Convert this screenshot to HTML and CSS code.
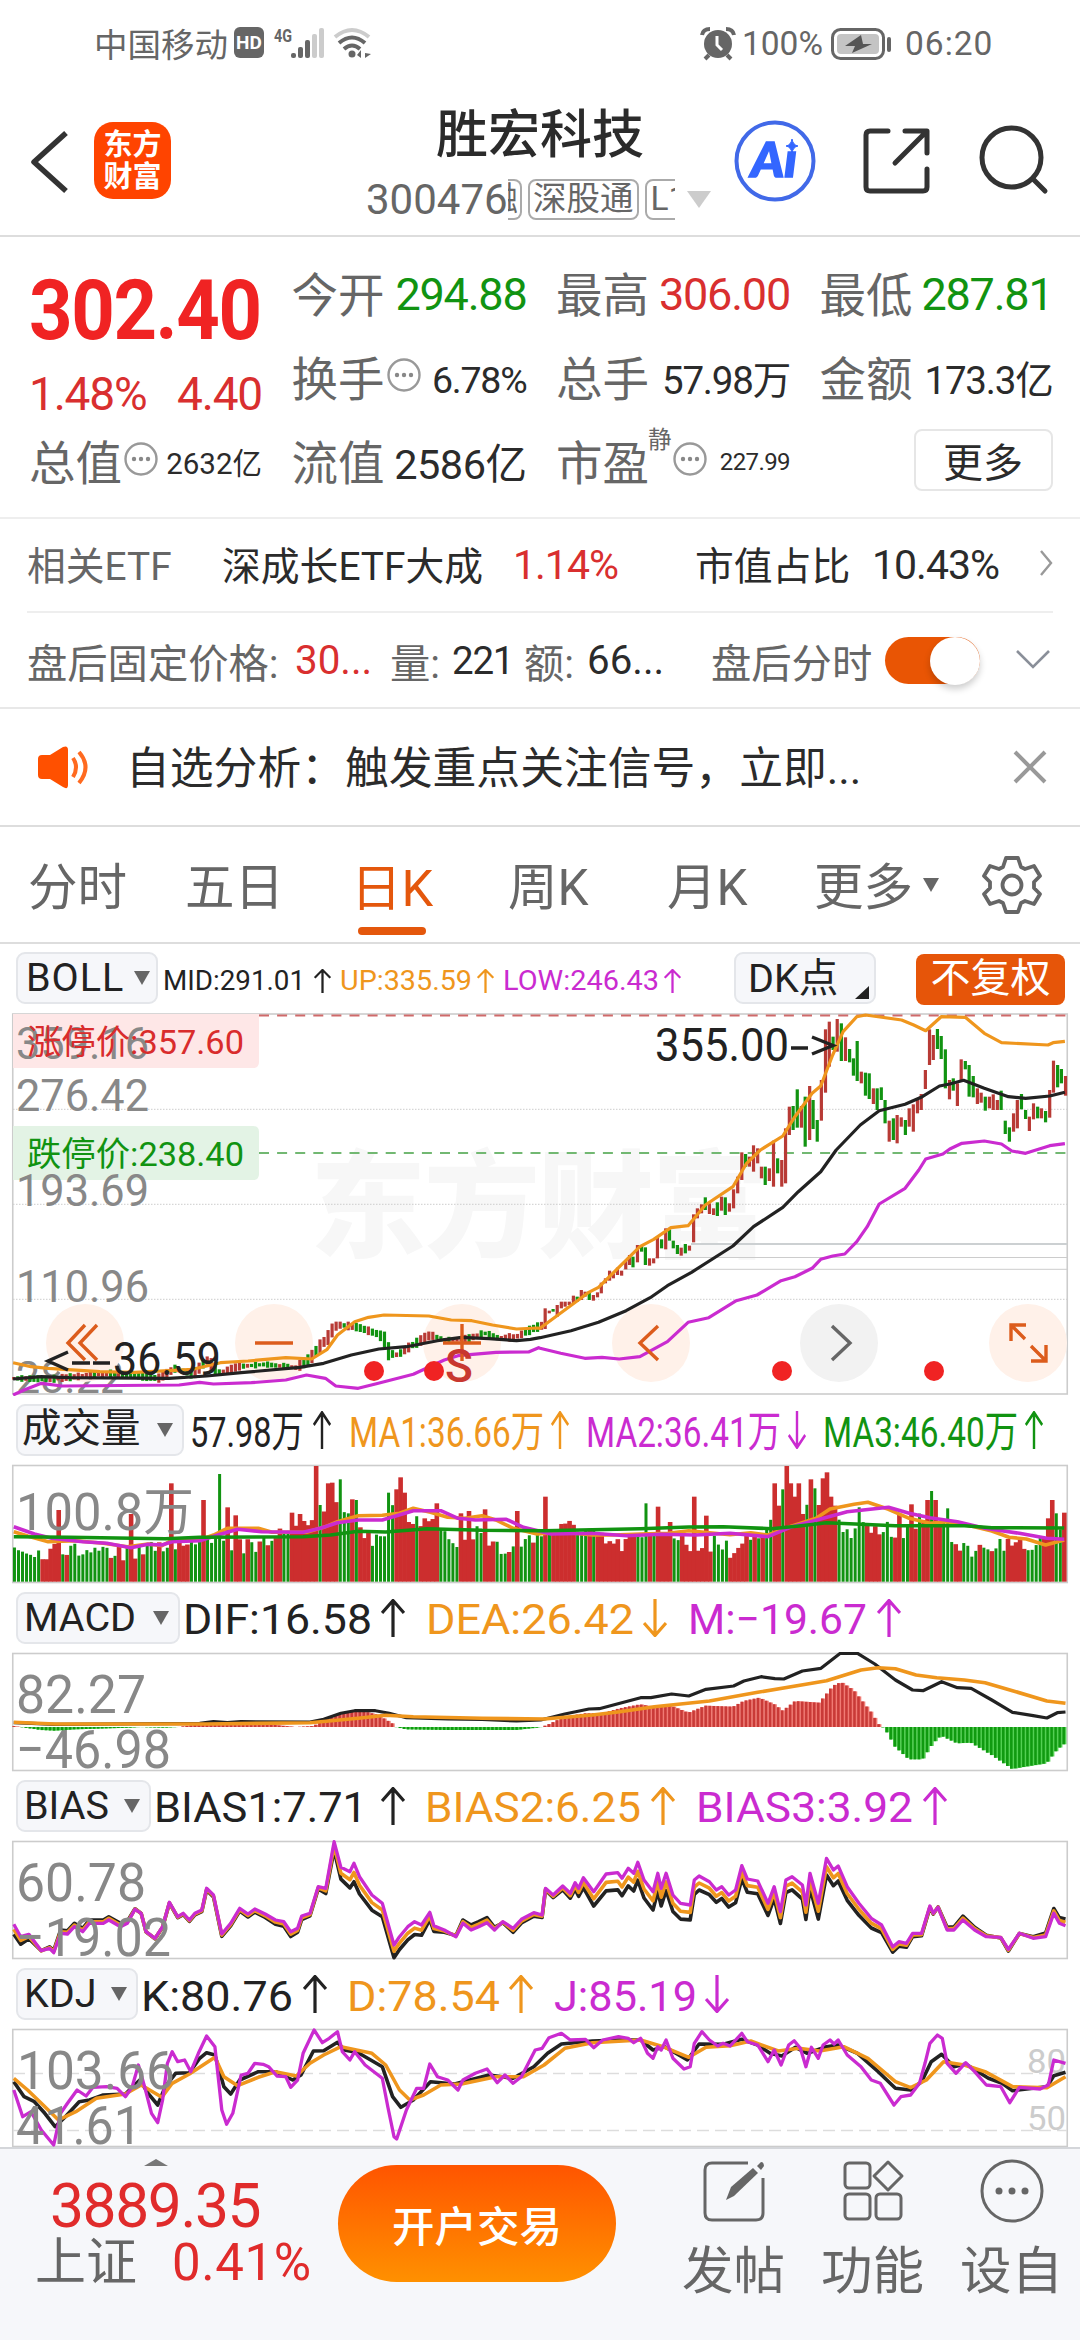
FILE: index.html
```html
<!DOCTYPE html>
<html lang="zh-CN">
<head>
    <meta charset="UTF-8" />
    <title>胜宏科技 300476</title>
    <link rel="stylesheet" href="styles.css">
</head>
<body>
<svg class="defs" width="0" height="0">
    <symbol id="up" viewBox="0 0 24 38" preserveAspectRatio="none"><path d="M12 38V2M1 14L12 1.5L23 14" fill="none" stroke="currentColor" stroke-width="3.2"/></symbol>
    <symbol id="down" viewBox="0 0 24 38" preserveAspectRatio="none"><path d="M12 0V36M1 24L12 36.5L23 24" fill="none" stroke="currentColor" stroke-width="3.2"/></symbol>
    <symbol id="more" viewBox="0 0 34 34"><circle cx="17" cy="17" r="15.500" fill="none" stroke="#999" stroke-width="2.4"/><g fill="#888"><circle cx="10" cy="17" r="2.200"/><circle cx="17" cy="17" r="2.200"/><circle cx="24" cy="17" r="2.200"/></g></symbol>
</svg>
<div class="page">
    <!-- Status bar -->
    <div class="status">
        <span class="carrier">中国移动</span>
        <span class="hd">HD</span>
        <svg class="signal" width="100" height="34" viewBox="272 26 100 34">
            <text x="274" y="41" font-size="19" font-weight="700" fill="#666" textLength="18" lengthAdjust="spacingAndGlyphs">4G</text>
            <g fill="#666"><rect x="291" y="52" width="5" height="5" rx="2"/><rect x="298" y="46" width="5" height="11" rx="2"/><rect x="305" y="39" width="5" height="18" rx="2"/></g>
            <g fill="#ccc"><rect x="312" y="33" width="5" height="24" rx="2"/><rect x="319" y="27" width="5" height="30" rx="2"/></g>
            <g fill="none" stroke-width="4"><path d="M335 36Q352 22 369 36" stroke="#ccc"/><path d="M339 42Q352 31 365 42" stroke="#666"/><path d="M344 48Q352 41 360 48" stroke="#666"/></g>
            <circle cx="352" cy="53" r="3.5" fill="#666"/><path d="M357 54l4-5v8zM371 53l-6-1v5zM366 51v7" fill="#666"/>
        </svg>
        <span class="spacer"></span>
        <svg width="36" height="34" viewBox="700 26 36 34"><circle cx="718" cy="43" r="14" fill="#666"/><path d="M702 34Q703 28 710 28M726 28Q733 28 734 34M709 54l-4 4M727 54l4 4" stroke="#666" stroke-width="4" fill="none"/><path d="M717 35v9l5 5" stroke="#fff" stroke-width="3" fill="none"/></svg>
        <span class="percent">100%</span>
        <svg class="battery" width="62" height="34" viewBox="829 25 62 34"><rect x="831.5" y="27.500" width="51" height="29" rx="8" fill="none" stroke="#666" stroke-width="3"/><rect x="836" y="32" width="42" height="20" rx="4" fill="#c4c4c4"/><path d="M860 33l-16 11h10l-3 7 20-9h-9z" fill="#555"/><rect x="886" y="35" width="4" height="15" rx="2" fill="#666"/></svg>
        <span class="clock">06:20</span>
    </div>

    <!-- Title bar -->
    <div class="header">
        <svg class="back" width="40" height="66" viewBox="0 0 40 66"><path d="M36 4L4 33L36 62" fill="none" stroke="#333" stroke-width="5.500" stroke-linejoin="round"/></svg>
        <div class="logo"><span>东方</span><span>财富</span></div>
        <div class="title">
            <h1>胜宏科技</h1>
            <div class="code">
                <span class="code-num">300476</span>
                <div class="tags"><span class="tag cut-left">融</span><span class="tag">深股通</span><span class="tag cut-right">L1</span></div>
                <i class="tri light"></i>
            </div>
        </div>
        <svg class="actions" width="330" height="90" viewBox="730 116 330 90">
            <circle cx="775" cy="161" r="38.500" fill="none" stroke="#4169e8" stroke-width="4"/>
            <text x="751" y="177" font-size="47" font-weight="900" font-style="italic" fill="#3366ff" stroke="#3366ff" stroke-width="1.600" textLength="46" lengthAdjust="spacingAndGlyphs" class="ai">Aı</text>
            <path d="M792 139q1 6 6 7q-5 1-6 7q-1-6-6-7q5-1 6-7z" fill="#3366ff" stroke="#3366ff"/>
            <g fill="none" stroke="#333" stroke-width="5" stroke-linecap="round" stroke-linejoin="round">
                <path d="M888 131H870q-4 0-4 4V187q0 4 4 4H923q4 0 4-4V169"/><path d="M905 131H927V153M926 132L895 163"/>
                <circle cx="1011.500" cy="157.500" r="29.500"/><path d="M1033 179l12 12"/>
            </g>
        </svg>
    </div>

    <!-- Quote -->
    <div class="quote">
        <div class="price">
            <div class="last">302.40</div>
            <div class="change"><span>1.48%</span><span>4.40</span></div>
        </div>
        <div class="cell r1"><label>今开</label><b class="green">294.88</b></div>
        <div class="cell r1"><label>最高</label><b class="red">306.00</b></div>
        <div class="cell r1"><label>最低</label><b class="green">287.81</b></div>
        <div class="cell r2"><label>换手</label><svg width="34" height="34"><use href="#more"/></svg><b class="v37">6.78%</b></div>
        <div class="cell r2"><label>总手</label><b class="v38">57.98万</b></div>
        <div class="cell r2"><label>金额</label><b class="v38">173.3亿</b></div>
        <div class="cell r3"><label>总值</label><svg width="34" height="34"><use href="#more"/></svg><b class="v29">2632亿</b></div>
        <div class="cell r3"><label>流值</label><b class="v41">2586亿</b></div>
        <div class="cell r3"><label>市盈</label><sup>静</sup><svg class="tight" width="34" height="34"><use href="#more"/></svg><b class="v24">227.99</b></div>
        <div class="cell r3"><button class="more">更多</button></div>
    </div>

    <div class="etf">
        <span class="gray">相关ETF</span><span>深成长ETF大成</span><span class="red num">1.14%</span><span>市值占比</span><span class="num">10.43%</span>
        <svg width="14" height="28" viewBox="0 0 14 28"><path d="M2 2L12 14L2 26" fill="none" stroke="#999" stroke-width="2.4"/></svg>
    </div>

    <div class="after">
        <span class="gray">盘后固定价格:</span><span class="red">30...</span><span class="gray">量:</span><span class="lots">221</span><span class="gray">额:</span><span>66...</span><span class="gray">盘后分时</span>
        <span class="toggle"><i></i></span>
        <svg width="34" height="22" viewBox="0 0 34 22"><path d="M1 2L17 18L33 2" fill="none" stroke="#8a8f99" stroke-width="2.600"/></svg>
    </div>

    <div class="notice">
        <svg width="52" height="44" viewBox="37 744 52 44"><path d="M42 754h8l13-8q5-2 5 3v35q0 5-5 2l-13-8h-8q-4 0-4-4v-16q0-4 4-4z" fill="#ff5000"/><path d="M73 757q6 9 0 19M79 751q13 15 0 31" fill="none" stroke="#ff6a20" stroke-width="4"/></svg>
        <p>自选分析：触发重点关注信号，立即...</p>
        <svg width="34" height="34" viewBox="0 0 34 34"><path d="M2 2L32 32M32 2L2 32" stroke="#999" stroke-width="4"/></svg>
    </div>

    <div class="tabs">
        <span>分时</span><span>五日</span><span class="active">日K</span><span>周K</span><span>月K</span><span>更多<i class="tri"></i></span>
        <svg width="60" height="60" viewBox="-30 -30 60 60"><path d="M-6-27H6L9-18L13-16L22-19L28-9L22-3V3L28 9L22 19L13 16L9 18L6 27H-6L-9 18L-13 16L-22 19L-28 9L-22 3V-3L-28-9L-22-19L-13-16L-9-18Z" fill="none" stroke="#666" stroke-width="3.800" stroke-linejoin="round"/><circle r="9.500" fill="none" stroke="#666" stroke-width="3.800"/></svg>
    </div>

    <!-- K line -->
    <div class="bar boll">
        <div class="chip"><span>BOLL</span><i class="tri"></i></div>
        <svg class="legend" width="576" height="69" viewBox="158 944 576 69" font-size="28">
            <g color="#222"><text x="163" y="990" textLength="142" lengthAdjust="spacingAndGlyphs">MID:291.01</text><use href="#up" x="314" y="969" width="17" height="24"/></g>
            <g color="#ef961d"><text x="340" y="990" textLength="132" lengthAdjust="spacingAndGlyphs">UP:335.59</text><use href="#up" x="477" y="969" width="17" height="24"/></g>
            <g color="#ca2bd0"><text x="503" y="990" textLength="156" lengthAdjust="spacingAndGlyphs">LOW:246.43</text><use href="#up" x="664" y="969" width="17" height="24"/></g>
        </svg>
        <div class="chip dk"><span>DK点</span><i></i></div>
        <div class="fq">不复权</div>
    </div>
    <svg id="kline" class="chart" width="1080" height="383" viewBox="0 1013 1080 383"></svg>

    <!-- Volume -->
    <div class="bar">
        <div class="chip w-vol"><span>成交量</span><i class="tri"></i></div>
        <svg class="legend" width="896" height="68" viewBox="184 1396 896 68" font-size="43">
            <g color="#222"><text x="190" y="1447" textLength="114" lengthAdjust="spacingAndGlyphs">57.98万</text><use href="#up" x="313" y="1411" width="18" height="38"/></g>
            <g color="#ef961d"><text x="349" y="1447" textLength="195" lengthAdjust="spacingAndGlyphs">MA1:36.66万</text><use href="#up" x="551" y="1411" width="18" height="38"/></g>
            <g color="#ca2bd0"><text x="586" y="1447" textLength="195" lengthAdjust="spacingAndGlyphs">MA2:36.41万</text><use href="#down" x="788" y="1411" width="18" height="38"/></g>
            <g color="#119311"><text x="823" y="1447" textLength="195" lengthAdjust="spacingAndGlyphs">MA3:46.40万</text><use href="#up" x="1025" y="1411" width="18" height="38"/></g>
        </svg>
    </div>
    <svg id="vol" class="chart" width="1080" height="120" viewBox="0 1464 1080 120"></svg>

    <!-- MACD -->
    <div class="bar">
        <div class="chip w-macd"><span>MACD</span><i class="tri"></i></div>
        <svg class="legend" width="900" height="68" viewBox="180 1584 900 68" font-size="43">
            <g color="#222"><text x="183" y="1634" textLength="189" lengthAdjust="spacingAndGlyphs">DIF:16.58</text><use href="#up" x="381" y="1599" width="24" height="38"/></g>
            <g color="#ef961d"><text x="426" y="1634" textLength="208" lengthAdjust="spacingAndGlyphs">DEA:26.42</text><use href="#down" x="643" y="1599" width="24" height="38"/></g>
            <g color="#ca2bd0"><text x="688" y="1634" textLength="179" lengthAdjust="spacingAndGlyphs">M:−19.67</text><use href="#up" x="877" y="1599" width="24" height="38"/></g>
        </svg>
    </div>
    <svg id="macd" class="chart" width="1080" height="120" viewBox="0 1652 1080 120"></svg>

    <!-- BIAS -->
    <div class="bar">
        <div class="chip w-bias"><span>BIAS</span><i class="tri"></i></div>
        <svg class="legend" width="929" height="68" viewBox="151 1772 929 68" font-size="43">
            <g color="#222"><text x="154" y="1822" textLength="213" lengthAdjust="spacingAndGlyphs">BIAS1:7.71</text><use href="#up" x="381" y="1787" width="24" height="38"/></g>
            <g color="#ef961d"><text x="425" y="1822" textLength="216" lengthAdjust="spacingAndGlyphs">BIAS2:6.25</text><use href="#up" x="651" y="1787" width="24" height="38"/></g>
            <g color="#ca2bd0"><text x="696" y="1822" textLength="217" lengthAdjust="spacingAndGlyphs">BIAS3:3.92</text><use href="#up" x="923" y="1787" width="24" height="38"/></g>
        </svg>
    </div>
    <svg id="bias" class="chart" width="1080" height="120" viewBox="0 1840 1080 120"></svg>

    <!-- KDJ -->
    <div class="bar">
        <div class="chip w-kdj"><span>KDJ</span><i class="tri"></i></div>
        <svg class="legend" width="942" height="68" viewBox="138 1960 942 68" font-size="43">
            <g color="#222"><text x="141" y="2011" textLength="152" lengthAdjust="spacingAndGlyphs">K:80.76</text><use href="#up" x="303" y="1975" width="24" height="38"/></g>
            <g color="#ef961d"><text x="347" y="2011" textLength="153" lengthAdjust="spacingAndGlyphs">D:78.54</text><use href="#up" x="509" y="1975" width="24" height="38"/></g>
            <g color="#ca2bd0"><text x="554" y="2011" textLength="143" lengthAdjust="spacingAndGlyphs">J:85.19</text><use href="#down" x="705" y="1975" width="24" height="38"/></g>
        </svg>
    </div>
    <svg id="kdj" class="chart" width="1080" height="119" viewBox="0 2028 1080 119"></svg>

    <!-- Bottom bar -->
    <div class="footer">
        <div class="index">
            <i></i>
            <strong>3889.35</strong>
            <div><span>上证</span><em>0.41%</em></div>
        </div>
        <button class="trade">开户交易</button>
        <div class="nav">
            <div>
                <svg width="64" height="64" viewBox="701 2159 64 64" fill="none" stroke="#666" stroke-width="3"><path d="M747 2163H711q-7 0-7 7V2213q0 7 7 7H755q7 0 7-7V2178"/><path d="M725 2200L730 2187L752 2168L757 2173L733 2196Z" fill="#666" stroke="none"/><path d="M756 2166l4-4q3 0 3 4l-3 4z" fill="#666" stroke="none"/></svg>
                <span>发帖</span>
            </div>
            <div>
                <svg width="64" height="64" viewBox="840 2159 64 64" fill="none" stroke="#666" stroke-width="3"><rect x="844" y="2163" width="25" height="25" rx="4"/><rect x="844" y="2194" width="25" height="25" rx="4"/><rect x="875" y="2194" width="25" height="25" rx="4"/><path d="M887 2162L901 2176L887 2190L873 2176Z" stroke-linejoin="round"/></svg>
                <span>功能</span>
            </div>
            <div>
                <svg width="64" height="64" viewBox="-32 -32 64 64"><circle r="30" fill="none" stroke="#666" stroke-width="3"/><g fill="#666"><circle cx="-13" r="3.500"/><circle r="3.500"/><circle cx="13" r="3.500"/></g></svg>
                <span>设自</span>
            </div>
        </div>
    </div>
</div>
<script src="charts.js"></script>
</body>
</html>
```
FILE: styles.css
```css
* {
    box-sizing: border-box;
}
body {
    margin: 0;
    background: #fff;
    color: #2b2b2b;
    font-family: Roboto, "Noto Sans CJK SC", sans-serif;
}
.page {
    width: 1080px;
    height: 2340px;
    overflow: hidden;
    display: flex;
    flex-direction: column;
    white-space: nowrap;
}
.page > * {
    flex: none;
}
.defs {
    position: absolute;
}
svg {
    display: block;
    flex: none;
}
i, em {
    font-style: normal;
}
.red {
    color: #d92f2f;
}
.green {
    color: #119311;
}
.gray {
    color: #666;
}
.spacer {
    flex: 1;
}
.tri {
    flex: none;
    width: 0;
    height: 0;
    border: 8.500px solid transparent;
    border-top: 14px solid #666;
    border-bottom: 0;
}
.tri.light {
    border-width: 17px 12px 0;
    border-top-color: #ccc;
}

/* status bar */
.status {
    height: 80px;
    padding: 7px 85px 0 94px;
    display: flex;
    align-items: center;
    color: #666;
    font-size: 33.5px;
}
.signal {
    overflow: visible;
}
.hd {
    width: 30px;
    height: 31px;
    margin: -2px 8px 0 6px;
    border-radius: 6px;
    background: #666;
    color: #fff;
    font-size: 19px;
    font-weight: 700;
    line-height: 32px;
    text-align: center;
}
.status .carrier {
    margin-top: -2px;
}
.percent {
    margin: 0 7px 0 6px;
}
.clock {
    width: 90px;
    margin-left: 13px;
    letter-spacing: 1px;
}

/* title bar */
.header {
    height: 157px;
    display: grid;
    grid-template-columns: 64px 272px 364px 1fr;
    padding-left: 30px;
    border-bottom: 2px solid #ddd;
}
.back {
    margin-top: 49px;
}
.logo {
    width: 77px;
    height: 77px;
    margin-top: 42px;
    padding-top: 7px;
    border-radius: 19px;
    background: #ff4400;
    color: #fff;
    font-size: 29px;
    font-weight: 700;
    line-height: 32px;
    display: flex;
    flex-direction: column;
    align-items: center;
}
.title h1 {
    margin: 24px 0 0 70px;
    font-size: 52px;
    font-weight: 500;
    line-height: 64px;
}
.code {
    display: flex;
    align-items: center;
    height: 64px;
    margin-top: -1px;
    color: #666;
}
.code-num {
    width: 142px;
    font-size: 42px;
}
.tags {
    display: flex;
    gap: 6px;
    width: 167px;
    overflow: hidden;
}
.tag {
    flex: none;
    height: 41px;
    padding: 0 3px;
    border: 2px solid #aaa;
    border-radius: 8px;
    font-size: 33.500px;
    line-height: 36px;
}
.cut-left {
    width: 14px;
    padding: 0 2px 0 0;
    display: flex;
    justify-content: flex-end;
    border-left: 0;
    border-radius: 0 8px 8px 0;
    overflow: hidden;
}
.cut-right {
    width: 45px;
    padding-left: 4px;
}
.code .tri {
    margin-left: 12px;
}
.actions {
    margin-top: 36px;
}
.ai {
    font-family: Lato, sans-serif;
}

/* quote */
.quote {
    height: 282px;
    padding: 14px 28px 0 29px;
    display: grid;
    grid-template-columns: 233px 235px 234px 233px;
    grid-template-rows: 84px 84px 84px;
    column-gap: 29.500px;
    border-bottom: 2px solid #eee;
}
.price {
    grid-row: 1 / 3;
}
.last {
    margin-top: 10px;
    color: #f02323;
    font-size: 83px;
    font-weight: 700;
    line-height: 100px;
    letter-spacing: -1.500px;
    transform: scaleX(.915);
    transform-origin: left;
}
.change {
    margin-top: 8px;
    display: flex;
    justify-content: space-between;
    color: #d92f2f;
    font-size: 46px;
    line-height: 50px;
    letter-spacing: -1.200px;
}
.cell {
    display: flex;
    align-items: center;
}
.cell label {
    margin-top: -4px;
    color: #666;
    font-size: 46.500px;
}
.cell b {
    margin-left: auto;
    font-size: 45px;
    font-weight: 400;
    letter-spacing: -1.200px;
    padding-top: 2px;
}
.cell svg {
    margin: -5px 0 0 2px;
}
.cell sup {
    width: 24px;
    margin: -46px 0 0 -1px;
    color: #666;
    font-size: 23.500px;
}
.cell .tight {
    margin-left: 1px;
}
.cell .v37 {
    font-size: 37.500px;
    padding-top: 5px;
}
.cell .v38 {
    font-size: 38.500px;
    padding-top: 0;
}
.cell .v29 {
    font-size: 29.500px;
    letter-spacing: 0;
    padding-top: 0;
}
.cell .v41 {
    font-size: 41.500px;
    letter-spacing: -.5px;
    padding-top: 0;
}
.cell .v24 {
    font-size: 24px;
    letter-spacing: -.6px;
}
.more {
    width: 139px;
    height: 62px;
    margin: -3px 0 0 auto;
    padding: 0;
    border: 2px solid #e6e6e6;
    border-radius: 8px;
    background: #fff;
    color: #2b2b2b;
    font: 40px/50px "Noto Sans CJK SC", sans-serif;
}

/* ETF, after-hours and notice rows */
.etf, .after, .notice {
    display: grid;
    align-items: center;
}
.etf {
    height: 94px;
    margin: 0 27px;
    padding-bottom: 4px;
    grid-template-columns: 195px 291px 182px 177px 167px 14px;
    font-size: 38.800px;
    border-bottom: 2px solid #eee;
}
.etf .num {
    font-size: 41px;
    letter-spacing: -1px;
    padding-top: 3px;
}
.after {
    height: 96px;
    padding: 0 0 0 27px;
    grid-template-columns: 268px 95px 62px 72px 63px 124px 174px 131px 34px;
    font-size: 40.300px;
    border-bottom: 2px solid #e8e8e8;
}
.lots {
    font-size: 38.500px;
    letter-spacing: -1.200px;
}
.toggle {
    width: 95px;
    height: 47px;
    border-radius: 24px;
    background: #e95504;
    display: flex;
    justify-content: flex-end;
}
.toggle i {
    width: 50px;
    height: 48px;
    border-radius: 50%;
    background: #fff;
    box-shadow: 0 4px 7px rgba(0, 0, 0, .2);
}
.notice {
    height: 118px;
    padding-left: 37px;
    grid-template-columns: 89px 887px 34px;
    border-bottom: 2px solid #ddd;
}
.notice p {
    margin: -4px 0 0;
    font-size: 43.800px;
}

/* period tabs */
.tabs {
    height: 117px;
    padding: 5px 0 0 28px;
    display: grid;
    grid-template-columns: 157px 166px 157px 159px 147px 168px 60px;
    align-items: center;
    border-bottom: 2px solid #ddd;
    color: #666;
    font-size: 49.500px;
    line-height: 110px;
}
.tabs span {
    height: 110px;
    padding-top: 2px;
    display: flex;
    align-items: center;
}
.tabs .tri {
    margin: -6px 0 0 10px;
}
.tabs svg {
    margin-top: -5px;
}
.tabs .active {
    color: #e4570c;
    font-size: 50.500px;
    flex-direction: column;
    align-items: flex-start;
}
.tabs .active::after {
    content: "";
    width: 68px;
    height: 8px;
    margin: -17px 0 0 7px;
    border-radius: 4px;
    background: #e4570c;
}

/* indicator bars */
.bar {
    height: 68px;
    padding-left: 16px;
    display: flex;
}
.bar.boll {
    height: 69px;
}
.chip {
    height: 52px;
    margin-top: 8px;
    padding: 0 9px 0 6px;
    display: flex;
    align-items: center;
    justify-content: space-between;
    border: 2px solid #e4e6ea;
    border-radius: 9px;
    background: #f6f7fa;
    color: #222;
    font-size: 39.500px;
    line-height: 48px;
    flex: none;
}
.w-vol {
    width: 168px;
    padding-left: 4px;
}
.w-vol span {
    margin-top: -2px;
}
.w-macd {
    width: 164px;
}
.w-bias {
    width: 135px;
}
.w-kdj {
    width: 122px;
}
.boll .chip {
    width: 142px;
    padding: 0 6px 0 8px;
    letter-spacing: 1px;
}
.boll .dk {
    width: 142px;
    padding: 2px 5px 0 12px;
    letter-spacing: 0;
}
.dk i {
    margin-top: 26px;
    border-left: 14px solid transparent;
    border-bottom: 13px solid #222;
}
.fq {
    width: 149px;
    height: 51px;
    margin: 10px 0 0 40px;
    border-radius: 8px;
    background: #e65509;
    color: #fff;
    font-size: 40px;
    line-height: 49px;
    text-align: center;
}
.legend text {
    fill: currentColor;
}
.chart {
    font-family: Roboto, "Noto Sans CJK SC", sans-serif;
}
.chart polyline {
    fill: none;
    stroke-linejoin: round;
}

/* bottom bar */
.footer {
    height: 193px;
    display: grid;
    grid-template-columns: 338px 278px 1fr;
    background: #f6f7fa;
    border-top: 2px solid #d4d6da;
}
.index {
    padding: 10px 0 0 35px;
    color: #e02b2b;
}
.index i {
    display: block;
    width: 24px;
    margin-left: 109px;
    border: 12px solid transparent;
    border-top: 0;
    border-bottom: 7px solid #777;
}
.index strong {
    display: block;
    margin: 9px 0 0 15px;
    font-size: 60.500px;
    font-weight: 400;
    line-height: 64px;
    letter-spacing: -1.400px;
}
.index div {
    display: flex;
    line-height: 50px;
    font-size: 51px;
    margin-top: -1px;
}
.index span {
    width: 137px;
    color: #666;
}
.index em {
    letter-spacing: .6px;
}
.trade {
    height: 117px;
    margin-top: 16px;
    border: 0;
    border-radius: 59px;
    background: linear-gradient(#ff5500, #ff9000);
    color: #fff;
    font: 500 42.500px/60px "Noto Sans CJK SC", sans-serif;
}
.nav {
    padding: 10px 0 0 48px;
    display: grid;
    grid-template-columns: 139px 139px 139px;
    color: #666;
    font-size: 51.500px;
}
.nav div {
    display: flex;
    flex-direction: column;
    align-items: center;
}
.nav span {
    margin-top: 19px;
    line-height: 60px;
}
```
FILE: charts.js
```js
const NS = 'http://www.w3.org/2000/svg';
const RED = '#cc2e2e', GREEN = '#119311', BLACK = '#222', ORANGE = '#ef961d', PINK = '#ca2bd0';

function add(parent, name, attrs, text) {
    const node = document.createElementNS(NS, name);
    for (const key in attrs) node.setAttribute(key, attrs[key]);
    if (text) node.textContent = text;
    parent.appendChild(node);
    return node;
}

// "x,y x,y" -> [[x, y], ...]
function parse(str, dx = 0) {
    return str.trim().split(/\s+/).map(p => {
        const [x, y] = p.split(',').map(Number);
        return [x + dx, y];
    });
}

// series are stored in plot units, each chart has its own scale
function line(svg, pts, color, s, width = 3.6) {
    add(svg, 'polyline', {
        points: pts.map(p => (p[0] * s.x).toFixed(1) + ',' + (s.y + p[1] / 3).toFixed(1)).join(' '),
        stroke: color, 'stroke-width': width
    });
}

// value of a series at x
function at(pts, x) {
    if (x <= pts[0][0]) return pts[0][1];
    for (let i = 1; i < pts.length; i++) {
        const a = pts[i - 1], b = pts[i];
        if (x <= b[0]) return a[1] + (b[1] - a[1]) * (x - a[0]) / (b[0] - a[0]);
    }
    return pts[pts.length - 1][1];
}

let seed = 7;
function rnd() {
    seed = (seed * 16807) % 2147483647;
    return seed / 2147483647;
}

function frame(svg, top, bottom) {
    add(svg, 'rect', { x: 12.75, y: top, width: 1054.5, height: bottom - top, fill: 'none', stroke: '#ccc', 'stroke-width': 1.6 });
}

function label(svg, str, x, y, w, size, color = '#888') {
    add(svg, 'text', { x, y, 'font-size': size, fill: color, textLength: w, lengthAdjust: 'spacingAndGlyphs' }, str);
}

function hline(svg, x, y, color, dash, width = 1.5) {
    add(svg, 'line', { x1: x, x2: 1067, y1: y, y2: y, stroke: color, 'stroke-width': width, 'stroke-dasharray': dash });
}

// ---------- K line ----------
function drawKline() {
    const svg = document.getElementById('kline');
    const s = { x: 0.34439, y: 1000 };
    const R = 1568; // right half of the window

    add(svg, 'text', { x: 310, y: 1248, 'font-size': 116, 'font-weight': 900, fill: '#f7f7f7', textLength: 458 }, '东方财富');
    frame(svg, 1014, 1394);
    [1109.3, 1204.3, 1299.3].forEach(y => hline(svg, 13, y, '#ccc', '1.5 1.5', 1));
    hline(svg, 691, 1244, '#ccd0d2', 'none', 2);
    hline(svg, 655, 1257.5, '#ccc', 'none', 1);
    hline(svg, 623, 1269.3, '#ccc', 'none', 1);

    add(svg, 'path', { d: 'M13 1014H259V1062q0 6-6 6H13z', fill: '#fee7e7' });
    add(svg, 'path', { d: 'M13 1126H253q6 0 6 6V1174q0 6-6 6H13z', fill: '#e3f3e5' });
    hline(svg, 259, 1015.5, '#cf6a6a', '10 8.1', 1.8);
    hline(svg, 259, 1153, '#72b872', '10 8.1', 1.8);

    label(svg, '359.16', 16, 1059, 133, 45);
    label(svg, '276.42', 16, 1110.5, 133, 45);
    label(svg, '193.69', 16, 1206, 133, 45);
    label(svg, '110.96', 16, 1301.5, 133, 45);
    label(svg, '28.22', 16, 1392.5, 108, 45);
    label(svg, '涨停价:357.60', 27, 1054, 217, 34, '#d92c2c');
    label(svg, '跌停价:238.40', 27, 1166, 217, 34, GREEN);

    // round buttons
    [85, 274, 462, 651, 839, 1028].forEach(x => {
        add(svg, 'circle', { cx: x, cy: 1343, r: 39, fill: x === 839 ? '#f2f2f2' : '#fff1e9' });
    });

    const candles = [];
    const close = parse('40,1135 150,1137 320,1120 460,1135 510,1105 560,1125 600,1080 640,1120 690,1100 770,1093 860,1103 900,1077 930,1038 955,1010 970,980 990,975 1040,982 1100,1003 1118,1020 1130,1060 1155,1065 1190,1040 1250,1005 1290,1020 1350,1018 1410,1000 1450,1015 1500,1010 1550,985 1580,975');
    for (let x = 40; x < 1575; x += 11.7) {
        const h = 4 + rnd() * 8 + (Math.abs(at(close, x + 8) - at(close, x - 8))) * 0.5;
        const up = at(close, x + 8) < at(close, x - 8);
        candles.push([x, at(close, x) - h, at(close, x) + h, rnd() < 0.72 === up]);
    }
    // r = up day, g = down day
    const right = '15r925-987 27r932-940 38g927-935 50r915-950 62r905-925 73r905-920 85r905-915 97r887-912 108g890-905 120r870-900 131r875-890 143g875-900 155r885-902 167r877-892 178r848-880 190r835-850 202r812-842 213r820-835 225r803-825 237r812-827 249r780-808 260r765-795 270g770-802 283r735-787 295g735-755 306g742-795 318r775-797 330r775-790 341r710-775 353g718-745 365r685-748 376g688-722 387g722-745 399g735-762 410r743-767 422g732-760 434r737-752 446r643-727 457r625-655 469r613-640 480g592-630 492r610-642 504r625-645 515g607-648 527r590-632 538g592-645 550r610-635 562r568-625 574r530-580 586r457-540 597g462-500 608r470-500 620r436-515 632r445-490 643r500-535 654g500-555 666r505-543 678r422-560 690g475-520 702r480-560 713r385-550 724r320-405 735g318-390 747g268-383 759r318-383 770g290-440 783r258-420 793g300-387 805g360-425 817r240-362 829r88-278 840r65-200 851g110-150 863r57-155 875g70-183 887r112-183 899g147-187 910g175-227 921g123-243 933r215-250 945g218-287 956g220-297 968r265-312 979g265-330 991g262-300 1002g300-370 1014r362-425 1026g355-420 1037r345-430 1049r352-380 1061g360-405 1072r325-380 1084r313-395 1096r300-340 1107r282-330 1119r210-267 1131r88-195 1142r105-180 1154g87-147 1165g108-177 1177g148-265 1189r240-298 1200g235-272 1212r250-318 1223r178-245 1235g183-208 1246g195-290 1258g228-292 1270r265-312 1281r278-308 1293g290-332 1305r290-325 1316r283-330 1328r300-330 1339g272-330 1351g362-402 1363g382-425 1375r340-395 1386r300-385 1398g282-328 1410g330-357 1421r350-393 1433r310-358 1445g320-355 1456r325-355 1468g333-367 1480r270-353 1491r182-278 1503g195-262 1514g207-250 1526r228-287';
    right.split(' ').forEach(c => {
        const m = c.match(/(\d+)([rg])(\d+)-(\d+)/);
        candles.push([+m[1] + R, +m[3], +m[4], m[2] === 'r']);
    });
    candles.forEach(c => {
        add(svg, 'rect', { x: c[0] * s.x - 1.6, y: s.y + c[1] / 3, width: 3.2, height: (c[2] - c[1]) / 3, fill: c[3] ? '#b83a35' : GREEN });
    });

    line(svg, parse('38,1088 90,1100 140,1105 290,1115 390,1117 490,1112 560,1108 640,1088 720,1083 830,1073 905,1077 950,1048 980,1005 1030,965 1070,952 1115,945 1245,948 1310,960 1370,962 1430,975 1500,987 1560,984')
        .concat(parse('0,985 140,878 170,862 290,740 330,718 380,683 430,677 480,615 560,560 600,490 640,450 705,408 740,350 790,280 815,258 850,165 880,95 920,50 945,45 1050,60 1085,75 1120,92 1165,50 1235,52 1290,100 1340,128 1475,135 1490,128 1524,124', R)), ORANGE, s, 3.2);
    line(svg, parse('38,1137 120,1130 200,1133 490,1135 600,1128 700,1118 870,1102 940,1090 1020,1065 1100,1047 1180,1040 1270,1022 1340,1012 1420,1016 1500,1022 1540,1018')
        .concat(parse('0,1013 90,992 170,967 250,932 320,893 370,857 440,817 560,738 620,680 705,622 750,575 815,515 860,450 930,375 985,332 1060,313 1110,290 1160,258 1190,252 1230,241 1290,265 1360,290 1410,295 1480,288 1524,277', R)), BLACK, s, 3.2);
    line(svg, parse('38,1185 70,1170 120,1150 180,1158 520,1155 580,1147 620,1152 730,1148 830,1140 890,1125 945,1135 975,1158 1040,1165 1090,1152 1200,1123 1290,1080 1330,1067 1440,1057 1535,1056 1564,1043')
        .concat(parse('0,1045 60,1060 130,1075 180,1072 230,1077 290,1070 370,1025 430,967 490,953 570,902 630,885 700,842 740,830 790,805 815,778 850,768 885,762 920,725 950,680 985,612 1060,565 1100,510 1120,477 1170,462 1190,447 1225,430 1290,423 1340,432 1370,453 1410,460 1480,437 1524,431', R)), PINK, s, 3.2);

    // button icons
    const icons = [
        ['M85 1325L68 1343L85 1360M97 1325L80 1343L97 1360', '#dc5c1c'],
        ['M255 1343H293', '#dc5c1c'],
        ['M443 1343H481M462 1324V1361', '#dc5c1c'],
        ['M658 1326L640 1343L658 1360', '#dc5c1c'],
        ['M832 1326L850 1343L832 1360', '#666'],
        ['M1011 1341V1325H1026M1012 1326L1025 1339M1046 1345V1361H1031M1045 1360L1031 1346', '#dc5c1c']
    ];
    icons.forEach(i => add(svg, 'path', { d: i[0], fill: 'none', stroke: i[1], 'stroke-width': 3.4 }));
    [374, 434, 782, 934].forEach(x => add(svg, 'circle', { cx: x, cy: 1371, r: 10, fill: '#f02323' }));
    add(svg, 'text', { x: 445, y: 1382, 'font-size': 46, 'font-weight': 500, fill: '#c8372f' }, 'S');

    // highest and lowest price marks
    label(svg, '355.00', 655, 1061, 134, 46, BLACK);
    label(svg, '36.59', 113, 1375, 108, 46, BLACK);
    add(svg, 'path', { d: 'M791 1048H808M812 1037L833 1045.500L812 1054M68 1352L48 1361L68 1370M72 1363H90M93 1363H110', fill: 'none', stroke: BLACK, 'stroke-width': 3.4 });
}

// ---------- volume ----------
function drawVolume() {
    const svg = document.getElementById('vol');
    const s = { x: 0.68878, y: 1400 };
    frame(svg, 1465.5, 1582.5);
    const base = parse('20,450 60,455 100,450 180,460 220,450 270,430 310,420 360,440 400,430 415,380 450,350 480,320 510,350 530,410 550,430 570,330 600,360 640,370 660,420 700,390 720,450 740,440 780,410 830,380 850,400 900,440 930,400 970,380 1000,440 1040,430 1060,450 1100,400 1130,330 1200,320 1230,390 1270,390 1320,390 1350,330 1370,360 1390,430 1430,460 1465,430 1500,430 1545,390');
    const peaks = {};
    '84r330 190r342 246r250 298r300 321g222 328r322 345r346 426r338 438r342 461r198 467g315 479r250 485r248 495g238 513r298 519g300 566g278 577r268 583r232 588r278 635r310 670r340 682r333 705r328 751r333 792r290 937g310 954r320 1007r290 1024r347 1123r250 1134g268 1140r198 1146r250 1152r290 1158r250 1175r238 1181g265 1192r235 1198r217 1204r290 1210r317 1245g322 1303r345 1326r313 1349r300 1355g273 1361r300 1373g325 1524r355 1529r300 1535g340 1545r338'.split(' ').forEach(p => {
        const m = p.match(/(\d+)([rg])(\d+)/);
        peaks[Math.round((m[1] - 21) / 5.84)] = [m[2], +m[3]];
    });
    const redRuns = [[60, 75], [420, 490], [573, 600], [610, 640], [665, 690], [800, 835], [865, 905], [985, 1030], [1060, 1085], [1120, 1160], [1185, 1215], [1340, 1365], [1465, 1485]];
    for (let i = 0; i < 262; i++) {
        const x = 21 + i * 5.84;
        let top = at(base, x) + (rnd() - 0.5) * 50;
        let red = redRuns.some(r => x >= r[0] && x <= r[1]) || rnd() < 0.36;
        if (peaks[i]) {
            red = peaks[i][0] === 'r';
            top = peaks[i][1];
        }
        const w = red ? 4.6 : 3;
        add(svg, 'rect', { x: x * s.x - w / 2, y: s.y + top / 3, width: w, height: (545 - top) / 3, fill: red ? RED : GREEN });
    }
    label(svg, '100.8万', 16, 1530, 178, 51);
    line(svg, parse('20,395 40,408 70,425 110,422 150,430 185,440 215,432 235,437 250,420 290,420 310,405 330,385 375,385 395,397 445,397 470,382 490,365 520,347 555,346 580,340 600,325 625,337 650,352 675,355 700,347 720,360 745,385 780,402 820,397 860,405 890,405 930,402 970,400 1000,392 1060,404 1090,398 1115,405 1150,378 1185,355 1205,327 1240,313 1260,307 1290,328 1320,355 1350,370 1375,365 1410,378 1440,393 1465,412 1490,417 1518,435 1545,420'), ORANGE, s);
    line(svg, parse('20,380 50,402 75,415 120,425 155,430 190,443 215,433 235,435 250,425 290,422 320,403 345,388 380,395 440,397 465,385 490,368 520,360 555,360 600,332 640,332 665,355 690,360 735,358 760,382 800,402 860,400 910,407 960,403 1010,405 1060,400 1115,410 1150,380 1190,358 1230,335 1290,322 1320,340 1350,353 1390,365 1430,385 1480,400 1520,415 1545,418'), PINK, s);
    line(svg, parse('20,410 100,412 240,416 290,412 440,410 480,405 520,394 560,396 620,386 700,391 790,392 930,386 1000,381 1050,380 1120,386 1160,378 1200,368 1300,377 1400,377 1440,383 1545,384'), GREEN, s);
}

// ---------- MACD ----------
function drawMacd() {
    const svg = document.getElementById('macd');
    const s = { x: 0.68878, y: 1590 };
    frame(svg, 1653.5, 1770.5);
    label(svg, '82.27', 16, 1712.5, 130, 54);
    label(svg, '−46.98', 16, 1767.5, 155, 54);
    const bars = parse('20,408 30,411 60,420 80,422 110,418 190,413 205,411 215,412 240,413 260,411 310,397 350,405 375,400 420,409 430,411 455,408 490,375 510,362 530,364 550,375 570,400 575,411 590,418 650,420 750,420 785,412 795,405 820,380 850,370 875,370 900,355 930,343 950,350 975,347 1000,368 1025,347 1065,350 1080,333 1103,323 1125,343 1137,362 1155,333 1190,338 1210,287 1222,276 1240,300 1265,365 1278,407 1285,415 1300,470 1320,508 1340,508 1355,460 1367,437 1390,460 1410,458 1440,495 1470,537 1490,530 1520,520 1535,480 1547,460');
    for (let i = 0; i < 262; i++) {
        const x = 21 + i * 5.84, y = at(bars, x), red = y < 411;
        const h = Math.abs(y - 411) / 3, px = x * s.x;
        const top = red ? 1727 - h : 1727;
        add(svg, 'rect', { x: px - 2, y: top, width: 4.1, height: h, fill: red ? '#f07b74' : '#53d053' });
        add(svg, 'rect', { x: px - 2, y: top, width: 2.6, height: h, fill: red ? '#c93a37' : '#109a10' });
    }
    line(svg, parse('20,398 80,403 290,400 310,395 330,398 350,395 450,396 470,388 495,370 515,362 545,362 565,370 590,383 650,387 700,388 750,393 785,390 820,372 855,357 870,356 930,323 945,323 975,312 1000,318 1025,298 1065,288 1080,273 1105,260 1125,266 1138,267 1165,243 1192,235 1220,190 1245,190 1270,222 1300,270 1325,300 1340,302 1367,275 1390,293 1410,295 1440,330 1470,367 1500,377 1520,384 1535,368 1547,366'), BLACK, s, 3.2);
    line(svg, parse('20,397 80,402 300,402 450,398 520,385 560,376 600,380 700,385 790,387 860,375 900,365 950,350 1030,333 1100,307 1170,283 1200,272 1250,240 1275,233 1300,236 1330,255 1360,263 1400,270 1430,278 1470,302 1520,333 1547,340'), ORANGE, s);
}

// ---------- BIAS ----------
function drawBias() {
    const svg = document.getElementById('bias');
    const s = { x: 0.68878, y: 1780 };
    frame(svg, 1841.5, 1958.5);
    const bias3 = parse('20,433 30,470 42,463 60,512 72,505 78,518 88,460 98,462 108,440 120,455 130,430 150,430 158,420 175,440 185,430 196,388 205,400 212,455 225,475 236,440 246,367 258,410 266,400 275,420 283,400 293,390 300,325 310,345 322,462 335,430 348,385 360,402 370,387 385,402 400,420 412,425 422,455 432,445 438,408 450,400 462,320 473,325 485,185 495,262 508,275 514,250 522,290 540,345 555,370 572,495 580,470 592,440 602,425 612,435 624,397 630,437 645,450 662,470 672,430 684,450 695,440 707,428 718,450 730,425 745,445 757,418 775,398 787,405 792,325 803,345 817,318 828,340 835,308 840,325 847,293 862,335 880,282 897,278 903,295 912,265 920,280 926,247 935,300 948,335 955,280 960,325 967,280 977,345 988,370 1002,375 1008,300 1015,288 1030,305 1040,330 1048,320 1058,345 1068,330 1077,257 1085,297 1100,303 1115,370 1124,320 1133,395 1141,300 1150,290 1165,315 1170,375 1176,280 1188,370 1200,235 1210,270 1217,258 1230,320 1247,370 1265,415 1280,435 1296,500 1305,485 1316,490 1325,460 1338,460 1350,378 1355,400 1362,382 1375,450 1385,450 1398,420 1415,450 1432,470 1453,472 1464,508 1480,460 1500,475 1518,470 1530,400 1538,430 1547,437');
    // distance of the short average from the long one
    const spread = parse('20,30 60,0 88,-10 175,-10 200,0 380,10 420,15 460,5 485,25 514,55 555,40 572,38 600,40 640,10 680,-15 710,-15 740,12 780,10 792,5 830,15 870,50 950,55 1000,45 1050,35 1080,40 1130,35 1200,50 1250,35 1300,15 1350,5 1375,-8 1400,-12 1430,-5 1464,5 1500,-5 1547,-20');
    line(svg, bias3.map(p => [p[0], p[1] + at(spread, p[0])]), BLACK, s);
    line(svg, bias3.map(p => [p[0], p[1] + at(spread, p[0]) / 2]), ORANGE, s);
    line(svg, bias3, PINK, s, 3.3);
    label(svg, '60.78', 16, 1900.5, 130, 54);
    label(svg, '−19.02', 16, 1955.5, 155, 54);
}

// ---------- KDJ ----------
function drawKdj() {
    const svg = document.getElementById('kdj');
    const s = { x: 0.68878, y: 1970 };
    frame(svg, 2029.5, 2146.5);
    hline(svg, 13, 2073.5, '#ddd', '12 6', 1.5);
    hline(svg, 13, 2130.5, '#ddd', '12 6', 1.5);
    label(svg, '80', 1027, 2072.5, 39, 34, '#ccc');
    label(svg, '50', 1027, 2130, 39, 34, '#ccc');
    line(svg, parse('20,335 35,380 50,395 65,430 80,470 95,440 115,395 130,390 150,375 182,372 203,330 215,370 229,405 240,350 255,310 275,308 290,265 300,248 312,255 325,350 335,372 348,330 375,305 400,305 425,330 437,315 455,243 470,242 490,217 500,240 520,248 555,290 570,380 582,412 600,390 625,335 660,342 710,315 745,325 775,290 795,250 815,222 860,213 900,210 930,210 948,240 965,230 998,270 1015,222 1050,223 1077,208 1100,225 1118,250 1135,258 1155,232 1172,250 1200,230 1217,225 1245,250 1275,305 1300,355 1322,360 1338,335 1352,275 1367,253 1385,290 1402,282 1435,325 1455,340 1470,362 1500,355 1520,350 1530,317 1547,307'), BLACK, s);
    line(svg, parse('20,325 40,360 60,400 85,450 110,425 140,385 182,372 205,345 235,382 250,340 275,312 312,262 325,320 345,347 375,322 400,305 430,318 450,280 470,255 495,230 540,250 560,285 580,360 595,390 615,375 640,345 670,342 720,320 760,320 790,285 820,235 860,218 930,210 965,232 1000,262 1025,232 1060,227 1090,213 1130,243 1160,235 1190,243 1225,230 1260,265 1300,335 1322,353 1345,330 1370,275 1400,285 1430,305 1470,350 1520,353 1547,320'), ORANGE, s);
    line(svg, parse('20,360 33,440 45,425 60,480 78,525 88,430 98,400 112,360 125,378 135,352 155,350 170,355 182,380 192,350 201,285 210,350 220,430 229,458 236,390 243,280 250,245 258,275 268,270 277,305 288,250 300,198 312,230 322,420 329,463 338,430 350,315 360,310 370,280 382,283 390,290 402,318 415,320 422,352 432,330 440,250 456,180 468,218 478,205 490,185 497,245 508,270 515,245 530,285 555,325 563,410 572,500 576,507 590,420 605,355 615,355 624,282 635,320 650,330 665,360 672,330 690,310 707,297 722,338 733,315 745,340 757,320 777,240 787,235 797,203 815,190 828,210 850,208 862,233 875,210 898,200 912,205 920,218 930,205 940,250 948,265 955,230 960,240 967,210 977,265 993,297 1002,290 1008,220 1019,185 1030,210 1042,228 1050,220 1060,228 1077,190 1085,215 1100,225 1115,275 1124,240 1134,285 1145,225 1153,212 1162,235 1170,290 1178,232 1188,265 1195,225 1205,210 1211,222 1217,210 1230,255 1250,290 1265,330 1278,340 1298,405 1308,380 1322,375 1335,340 1343,280 1350,220 1361,195 1368,205 1375,280 1388,310 1402,278 1415,305 1432,345 1453,350 1466,398 1480,352 1510,357 1522,345 1530,270 1547,280'), PINK, s, 3.3);
    label(svg, '103.66', 17, 2089, 158, 54);
    label(svg, '41.61', 16, 2143.5, 126, 54);
}

drawKline();
drawVolume();
drawMacd();
drawBias();
drawKdj();
```
